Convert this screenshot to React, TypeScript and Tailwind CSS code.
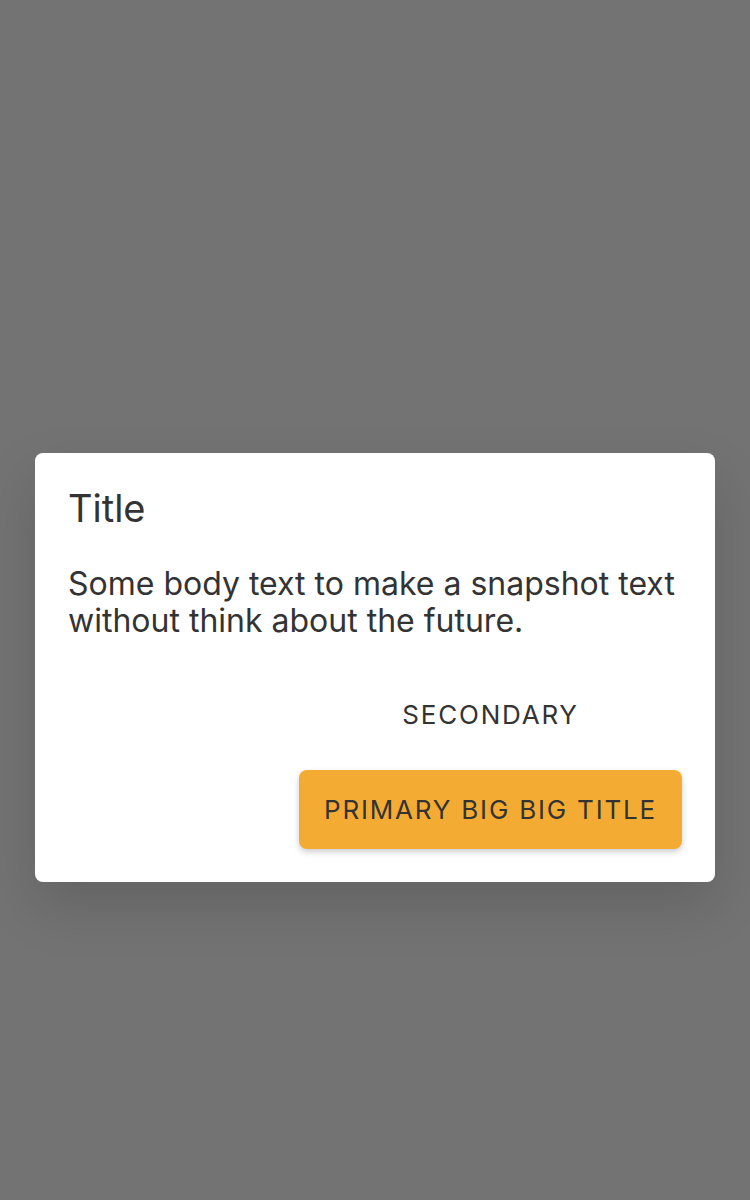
export default function App() {
  return (
    <div
      className="flex h-screen w-full items-center justify-center bg-[#737373] px-[35px] pt-[134px]"
      style={{ fontFamily: "Inter, 'Noto Sans', sans-serif" }}
    >
      <div className="flex w-full flex-col rounded-[8px] bg-white px-[33px] pt-[29px] pb-[33px] text-[#333333] shadow-[0_24px_56px_rgba(0,0,0,0.14)]">
        <h1 className="text-[38px] leading-[52px]">Title</h1>
        <p className="mt-[31px] text-[32px] leading-[37px]">
          Some body text to make a snapshot text without think about the
          future.
        </p>
        <div className="mt-[36px] flex flex-col items-stretch gap-[16px] self-end">
          <button className="h-[79px] rounded-[8px] px-[25px] text-[26px] tracking-[1.8px] uppercase">
            Secondary
          </button>
          <button className="h-[79px] rounded-[8px] bg-[#f4ab33] px-[25px] text-[26px] tracking-[1.8px] uppercase shadow-[0_3px_6px_rgba(0,0,0,0.2)]">
            Primary big big title
          </button>
        </div>
      </div>
    </div>
  );
}
